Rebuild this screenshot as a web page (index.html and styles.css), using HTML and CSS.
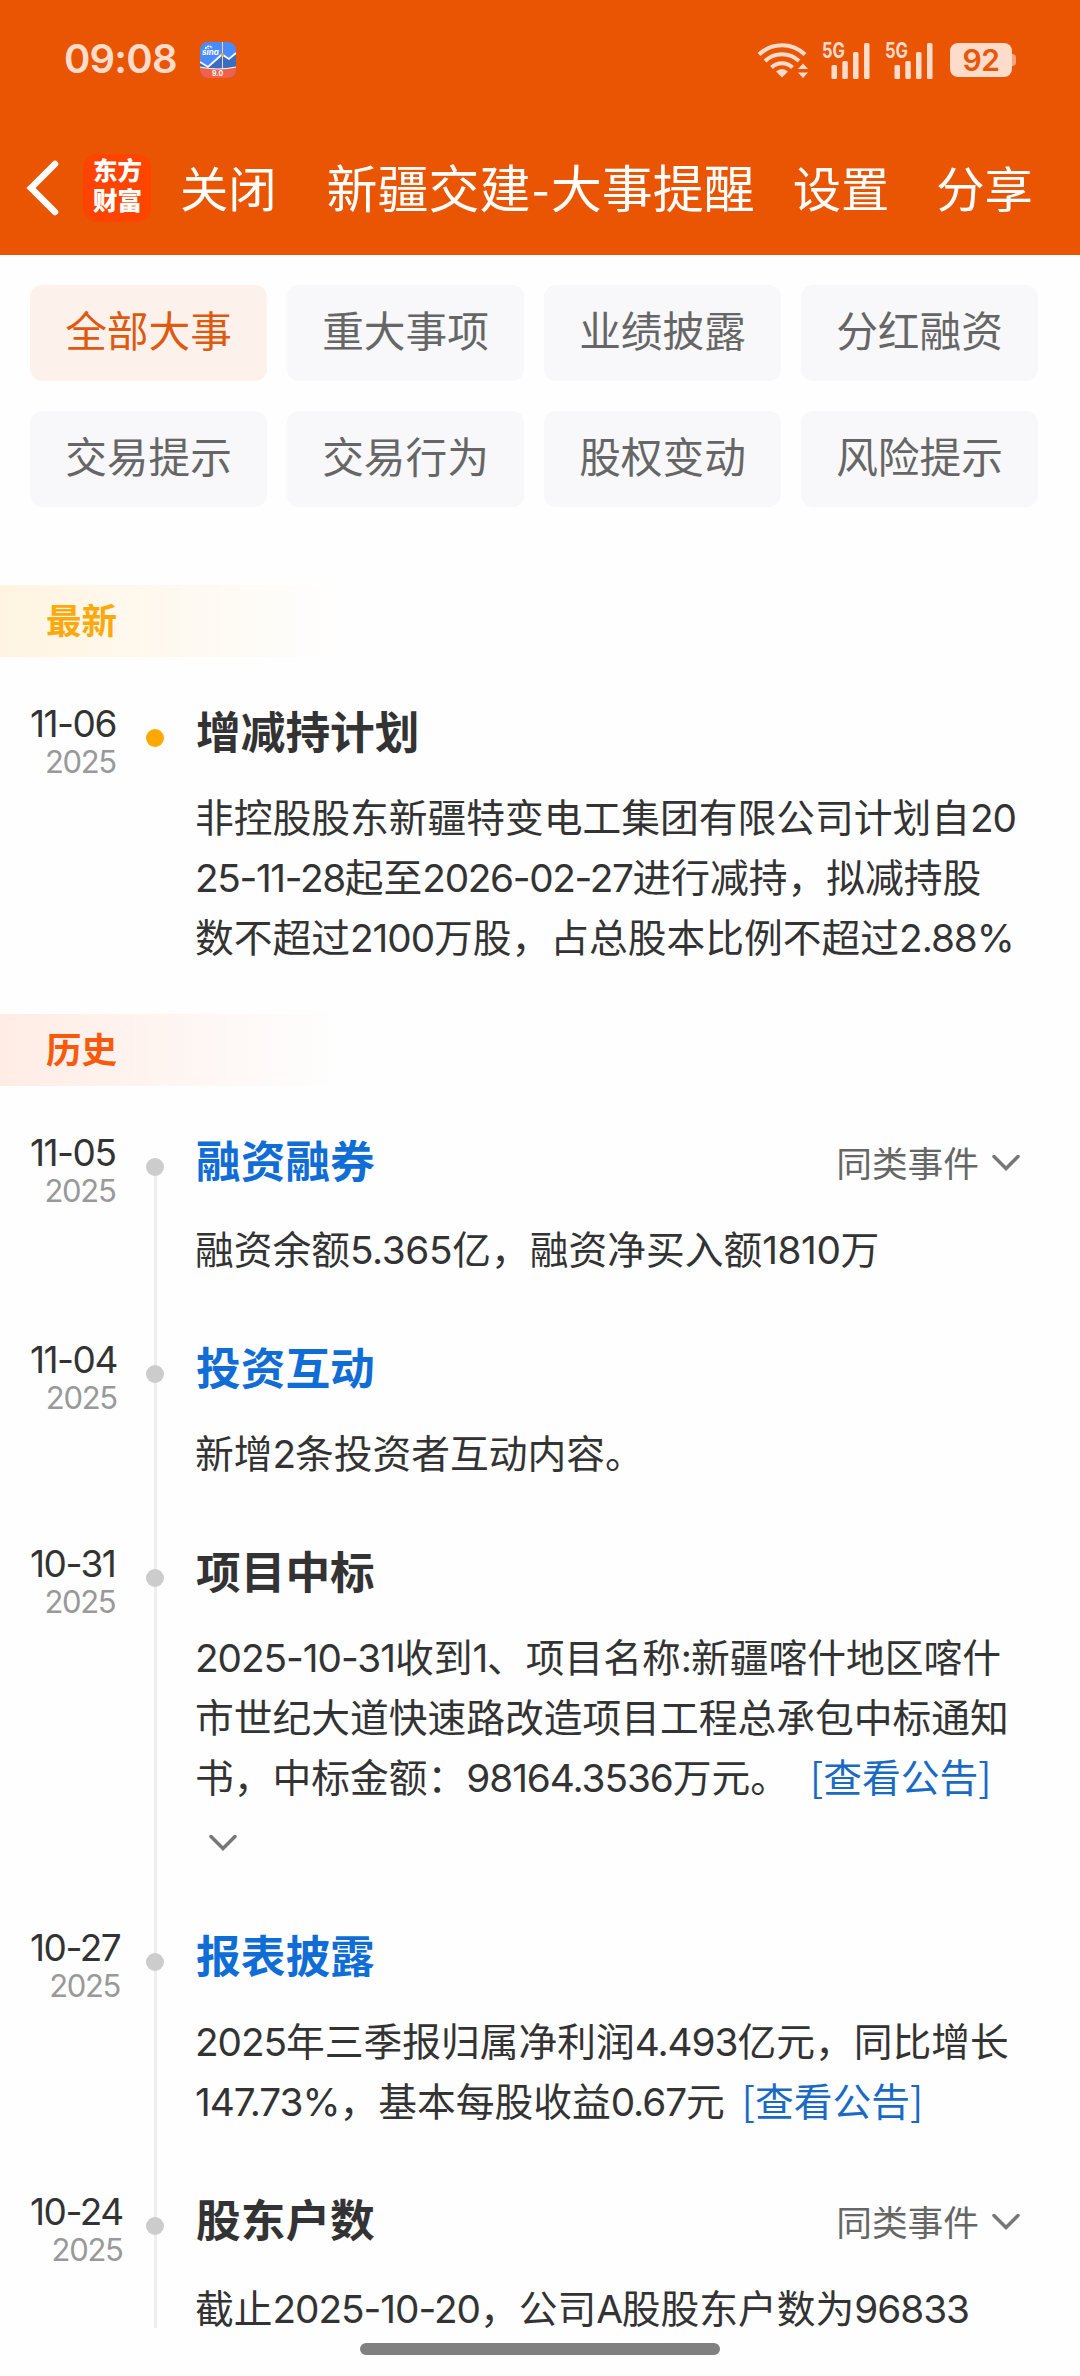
FILE: index.html
```html
<!DOCTYPE html>
<html lang="zh-CN">
<head>
<meta charset="utf-8">
<title>新疆交建-大事提醒</title>
<link rel="stylesheet" href="styles.css">
</head>
<body>
<div class="screen">
  <header class="header">
    <div class="status">
      <span class="clock">09:08</span>
      <svg class="app-icon" width="36" height="36" viewBox="0 0 36 36">
        <defs><clipPath id="round"><rect width="36" height="36" rx="8"/></clipPath></defs>
        <g clip-path="url(#round)">
          <rect width="36" height="36" fill="#4a8cff"/>
          <path d="M0 21 8 25 22 13 29 17 36 11V36H0Z" fill="#3a6cc0"/>
          <path d="M0 20 8 25 22 12.500 29 17 36 11" fill="none" stroke="#fff" stroke-width="1.800"/>
          <path d="M22.500 0V28" stroke="#e8d9b0" stroke-width="1"/>
          <circle cx="22.500" cy="12.500" r="1.600" fill="#f0a030"/>
          <path d="M0 25Q18 29 36 25V36H0Z" fill="#f2604a"/>
          <path d="M0 25Q18 29 36 25" fill="none" stroke="#fff" stroke-width="1"/>
          <path d="M5.500 7A3.500 3.500 0 0 1 12 6" fill="none" stroke="#fff" stroke-width="1.600" stroke-dasharray="2 .6"/>
          <text x="2" y="13" class="sina">sina</text>
          <text x="12" y="34" class="ver">9.0</text>
        </g>
      </svg>
      <div class="indicators">
        <svg class="wifi" width="52" height="38" viewBox="0 0 52 38" fill="none" stroke="#fddccb" stroke-width="4">
          <path d="M2 13.500A33 33 0 0 1 48 13.500"/>
          <path d="M8 20A24.500 24.500 0 0 1 42 20"/>
          <path d="M14.500 26.500A15 15 0 0 1 35.500 26.500"/>
          <path d="M25 36.500 19 30.500Q25 25.500 31 30.500Z" fill="#fddccb" stroke="none"/>
          <path d="M41 28 46 22.500 51 28ZM41 31.500H51L46 37Z" fill="#fddccb" stroke="none"/>
        </svg>
        <svg class="signal" width="48" height="38" viewBox="0 0 48 38" fill="#fddccb">
          <text x="0" y="16.500" class="gen" textLength="23" lengthAdjust="spacingAndGlyphs">5G</text>
          <rect x="9.500" y="24" width="5.500" height="14" rx="1.500"/><rect x="20.300" y="20" width="5.500" height="18" rx="1.500"/><rect x="31" y="11" width="5.500" height="27" rx="1.500"/><rect x="42" y="2" width="5.500" height="36" rx="1.500"/>
        </svg>
        <svg class="signal" width="48" height="38" viewBox="0 0 48 38" fill="#fddccb">
          <text x="0" y="16.500" class="gen" textLength="23" lengthAdjust="spacingAndGlyphs">5G</text>
          <rect x="9.500" y="24" width="5.500" height="14" rx="1.500"/><rect x="20.300" y="20" width="5.500" height="18" rx="1.500"/><rect x="31" y="11" width="5.500" height="27" rx="1.500"/><rect x="42" y="2" width="5.500" height="36" rx="1.500"/>
        </svg>
        <div class="battery"><span class="level">92</span><span class="nub"></span></div>
      </div>
    </div>
    <nav class="nav">
      <svg class="back" width="36" height="60" viewBox="0 0 36 60" fill="none" stroke="#fff" stroke-width="6.500" stroke-linecap="round" stroke-linejoin="miter"><path d="M31 6 7 30 31 54"/></svg>
      <div class="logo"><span>东方</span><span>财富</span></div>
      <span class="action close">关闭</span>
      <h1 class="page-title">新疆交建<span class="dash">-</span>大事提醒</h1>
      <span class="action setup">设置</span>
      <span class="action share">分享</span>
    </nav>
  </header>

  <div class="chips">
    <span class="chip active">全部大事</span><span class="chip">重大事项</span><span class="chip">业绩披露</span><span class="chip">分红融资</span>
    <span class="chip">交易提示</span><span class="chip">交易行为</span><span class="chip">股权变动</span><span class="chip">风险提示</span>
  </div>

  <main class="feed">
    <h2 class="band latest">最新</h2>
    <section class="events">
      <article class="event new">
        <div class="date"><span class="day">11-06</span><span class="year">2025</span></div>
        <div class="rail"><i class="dot"></i></div>
        <div class="content">
          <div class="head"><h3>增减持计划</h3></div>
          <p>非控股股东新疆特变电工集团有限公司计划自<span class="n">20</span><br><span class="n d">25-11-28</span>起至<span class="n d">2026-02-27</span>进行减持，拟减持股<br>数不超过<span class="n">2100</span>万股，占总股本比例不超过<span class="n">2.88%</span></p>
        </div>
      </article>
    </section>

    <h2 class="band history">历史</h2>
    <section class="events line">
      <article class="event">
        <div class="date"><span class="day">11-05</span><span class="year">2025</span></div>
        <div class="rail"><i class="dot"></i></div>
        <div class="content">
          <div class="head more"><h3 class="blue">融资融券</h3><span class="same">同类事件<svg class="chev" width="28" height="18" viewBox="0 0 28 18"><path d="M2 2.500 14 14.500 26 2.500"/></svg></span></div>
          <p>融资余额<span class="n w">5.365</span>亿，融资净买入额<span class="n w">1810</span>万</p>
        </div>
      </article>
      <article class="event">
        <div class="date"><span class="day">11-04</span><span class="year">2025</span></div>
        <div class="rail"><i class="dot"></i></div>
        <div class="content">
          <div class="head"><h3 class="blue">投资互动</h3></div>
          <p>新增<span class="n">2</span>条投资者互动内容。</p>
        </div>
      </article>
      <article class="event">
        <div class="date"><span class="day">10-31</span><span class="year">2025</span></div>
        <div class="rail"><i class="dot"></i></div>
        <div class="content">
          <div class="head"><h3>项目中标</h3></div>
          <p><span class="n">2025-10-31</span>收到<span class="n">1</span>、项目名称<span class="n">:</span>新疆喀什地区喀什<br>市世纪大道快速路改造项目工程总承包中标通知<br>书，中标金额：<span class="n">98164.3536</span>万元。<a class="link far">[查看公告]</a><br><svg class="chev expand" width="28" height="18" viewBox="0 0 28 18"><path d="M2 2.500 14 14.500 26 2.500"/></svg></p>
        </div>
      </article>
      <article class="event">
        <div class="date"><span class="day">10-27</span><span class="year">2025</span></div>
        <div class="rail"><i class="dot"></i></div>
        <div class="content">
          <div class="head"><h3 class="blue">报表披露</h3></div>
          <p><span class="n">2025</span>年三季报归属净利润<span class="n">4.493</span>亿元，同比增长<br><span class="n">147.73%</span>，基本每股收益<span class="n">0.67</span>元<a class="link">[查看公告]</a></p>
        </div>
      </article>
      <article class="event">
        <div class="date"><span class="day">10-24</span><span class="year">2025</span></div>
        <div class="rail"><i class="dot"></i></div>
        <div class="content">
          <div class="head more"><h3>股东户数</h3><span class="same">同类事件<svg class="chev" width="28" height="18" viewBox="0 0 28 18"><path d="M2 2.500 14 14.500 26 2.500"/></svg></span></div>
          <p>截止<span class="n">2025-10-20</span>，公司<span class="n">A</span>股股东户数为<span class="n">96833</span></p>
        </div>
      </article>
    </section>
  </main>
  <footer class="gesture"><span class="pill"></span></footer>
</div>
</body>
</html>
```
FILE: styles.css
```css
* { box-sizing: border-box; margin: 0; padding: 0; }
body { background: #fefefe; color: #333; font-family: "Noto Sans CJK SC", sans-serif; }
.screen { width: 1080px; height: 2376px; display: flex; flex-direction: column; overflow: hidden; white-space: nowrap; }

/* header */
.header { height: 255px; background: #ea5504; color: #fff; flex: none; }
.status { height: 120px; padding-left: 64px; display: flex; align-items: center; font-family: Inter, sans-serif; color: #fddccb; }
.clock { width: 136px; font-size: 40px; font-weight: 600; letter-spacing: -.8px; line-height: 48px; margin-top: -3px; }
.sina { font: italic 700 8px Inter, sans-serif; fill: #fff; }
.ver { font: 700 7px Inter, sans-serif; fill: #fff; }
.indicators { margin-left: 521px; display: flex; align-items: center; }
.signal { margin-left: 13px; overflow: visible; }
.signal + .signal { margin-left: 15px; }
.gen { font: 700 21px Inter, sans-serif; }
.battery { margin-left: 17px; display: flex; align-items: center; }
.level { width: 62px; height: 34px; border-radius: 8px; background: #fddccb; color: #ea5504; font-size: 30px; font-weight: 600; line-height: 35px; text-align: center; letter-spacing: -.5px; }
.nub { width: 4px; height: 12px; border-radius: 0 4px 4px 0; background: #f6a67d; }
.nav { height: 135px; padding-left: 24px; display: flex; align-items: center; }
.logo { width: 68px; height: 68px; margin-left: 23px; padding: 0 0 5px 1px; border-radius: 14px; background: #ff4400; display: flex; flex-direction: column; align-items: center; justify-content: center; font-size: 24.500px; font-weight: 900; line-height: 30px; }
.action { font-size: 48.300px; line-height: 60px; padding-bottom: 4px; }
.close { margin-left: 29px; }
.page-title { margin-left: 50px; font-size: 51px; font-weight: 400; line-height: 60px; padding-bottom: 4px; }
.dash { display: inline-block; width: 20px; text-align: center; }
.setup { margin-left: 38px; }
.share { margin-left: 47px; }

/* filters */
.chips { padding: 30px 42px 78px 30px; display: grid; grid-template-columns: repeat(4, 237px); gap: 30px 20px; flex: none; }
.chip { height: 96px; border-radius: 12px; background: #f8f8fa; color: #666; font-size: 41.700px; line-height: 89px; text-align: center; }
.chip.active { background: #fdf1eb; color: #dd5a10; }

/* feed */
.feed { height: 1743px; flex: none; }
.band { height: 72px; padding-left: 46px; font-size: 35.500px; font-weight: 700; line-height: 68px; }
.latest { color: #fca90d; background: linear-gradient(90deg, #fff4e1, rgba(255, 250, 240, 0) 340px); }
.history { color: #f75a0c; background: linear-gradient(90deg, #ffece5, rgba(255, 247, 243, 0) 340px); }
.events { padding: 43px 60px 0 30px; }
.event { display: flex; align-items: stretch; }
.date { width: 116px; flex: none; display: grid; grid-template-columns: max-content; align-content: start; font-family: Inter, sans-serif; }
.day { font-size: 37px; line-height: 40px; padding-top: 4px; letter-spacing: -1.500px; }
.year { font-size: 31px; line-height: 36px; color: #999; text-align: right; letter-spacing: -1.300px; }
.rail { width: 18px; flex: none; display: flex; flex-direction: column; align-items: center; padding-top: 29px; }
.dot { width: 18px; height: 18px; border-radius: 50%; background: #ccc; flex: none; }
.new .dot { background: #ffa900; }
.line .event .rail { background: linear-gradient(#eee, #eee) 8px 0 / 3px 100% no-repeat; }
.line .event:first-child .rail { background-position: 8px 38px; }
.line .event:last-child .rail { height: 140px; align-self: flex-start; }
.content { flex: 1; padding: 0 0 59px 31px; }
.new .content { padding-bottom: 49px; }
.line .event:last-child .content { padding-bottom: 0; }
.head { height: 60px; margin-bottom: 25px; display: flex; justify-content: space-between; }
.head.more { margin-bottom: 28px; }
h3 { font-size: 44.700px; font-weight: 700; line-height: 59px; padding-left: 1px; }
.blue { color: #106dd6; }
.same { display: flex; align-items: center; font-size: 35.700px; line-height: 60px; color: #666; padding-top: 5px; }
.chev { fill: none; stroke: #777; stroke-width: 3.500px; stroke-linecap: round; }
.same .chev { margin: 3px 0 0 13px; }
.expand { margin-left: 14px; }
p { font-size: 38.750px; line-height: 60px; }
.n { font-family: Inter, sans-serif; letter-spacing: -1.050px; line-height: 1; }
.n.d { letter-spacing: -1.350px; }
.n.w { letter-spacing: -.400px; }
.link { color: #1a6ac4; margin-left: 17px; }
.link.far { margin-left: 21px; }

.gesture { height: 48px; display: flex; justify-content: center; padding-top: 15px; }
.pill { width: 360px; height: 12px; border-radius: 6px; background: #808080; }
```
